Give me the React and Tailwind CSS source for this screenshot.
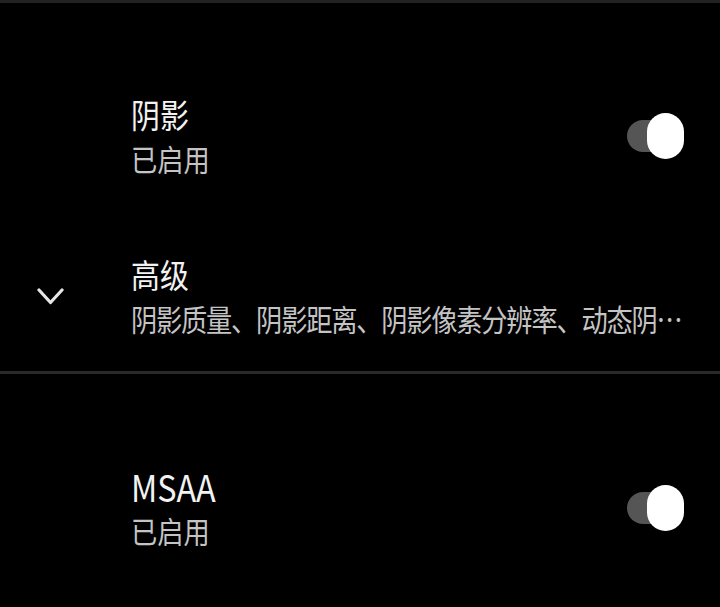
const font = { fontFamily: '"Noto Sans CJK SC", "Noto Sans", sans-serif' }

function Toggle() {
  return (
    <div className="flex items-center">
      <div className="w-[40px] h-[32px] rounded-full bg-[#555555]" />
      <div className="-ml-[20px] w-[37px] h-[46px] rounded-full bg-white" />
    </div>
  )
}

function Texts({ title, subtitle, tight, latin }) {
  return (
    <div className="flex-1 min-w-0 origin-left scale-x-[0.875]">
      <div
        className={`leading-[44px] text-[#f2f2f2] whitespace-nowrap ${latin ? 'text-[37px]' : 'text-[33px]'}`}
      >
        {title}
      </div>
      <div
        className={`text-[30px] leading-[44px] text-[#c4c4c4] whitespace-nowrap ${tight ? 'tracking-[-1.4px]' : ''}`}
      >
        {subtitle}
      </div>
    </div>
  )
}

export default function App() {
  return (
    <div className="w-[720px] h-[607px] bg-black overflow-hidden flex flex-col" style={font}>
      <div className="h-[3px] bg-[#222222]" />

      {/* 阴影 */}
      <div className="mt-[89px] flex items-center pl-[131px] pr-[36px]">
        <Texts title="阴影" subtitle="已启用" />
        <Toggle />
      </div>

      {/* 高级 */}
      <div className="mt-[72px] flex items-center">
        <div className="w-[131px] pl-[37px]">
          <svg width="27" height="19" viewBox="0 0 27 19" fill="none">
            <polyline
              points="2,3 13.5,15.5 25,3"
              stroke="#e6e6e6"
              strokeWidth="3.2"
              strokeLinecap="round"
              strokeLinejoin="round"
            />
          </svg>
        </div>
        <Texts title="高级" subtitle="阴影质量、阴影距离、阴影像素分辨率、动态阴⋯" tight />
      </div>

      <div className="mt-[31px] h-[3px] bg-[#2a2a2a]" />

      {/* MSAA */}
      <div className="mt-[90px] flex items-center pl-[131px] pr-[36px]">
        <Texts title="MSAA" subtitle="已启用" latin />
        <Toggle />
      </div>
    </div>
  )
}
